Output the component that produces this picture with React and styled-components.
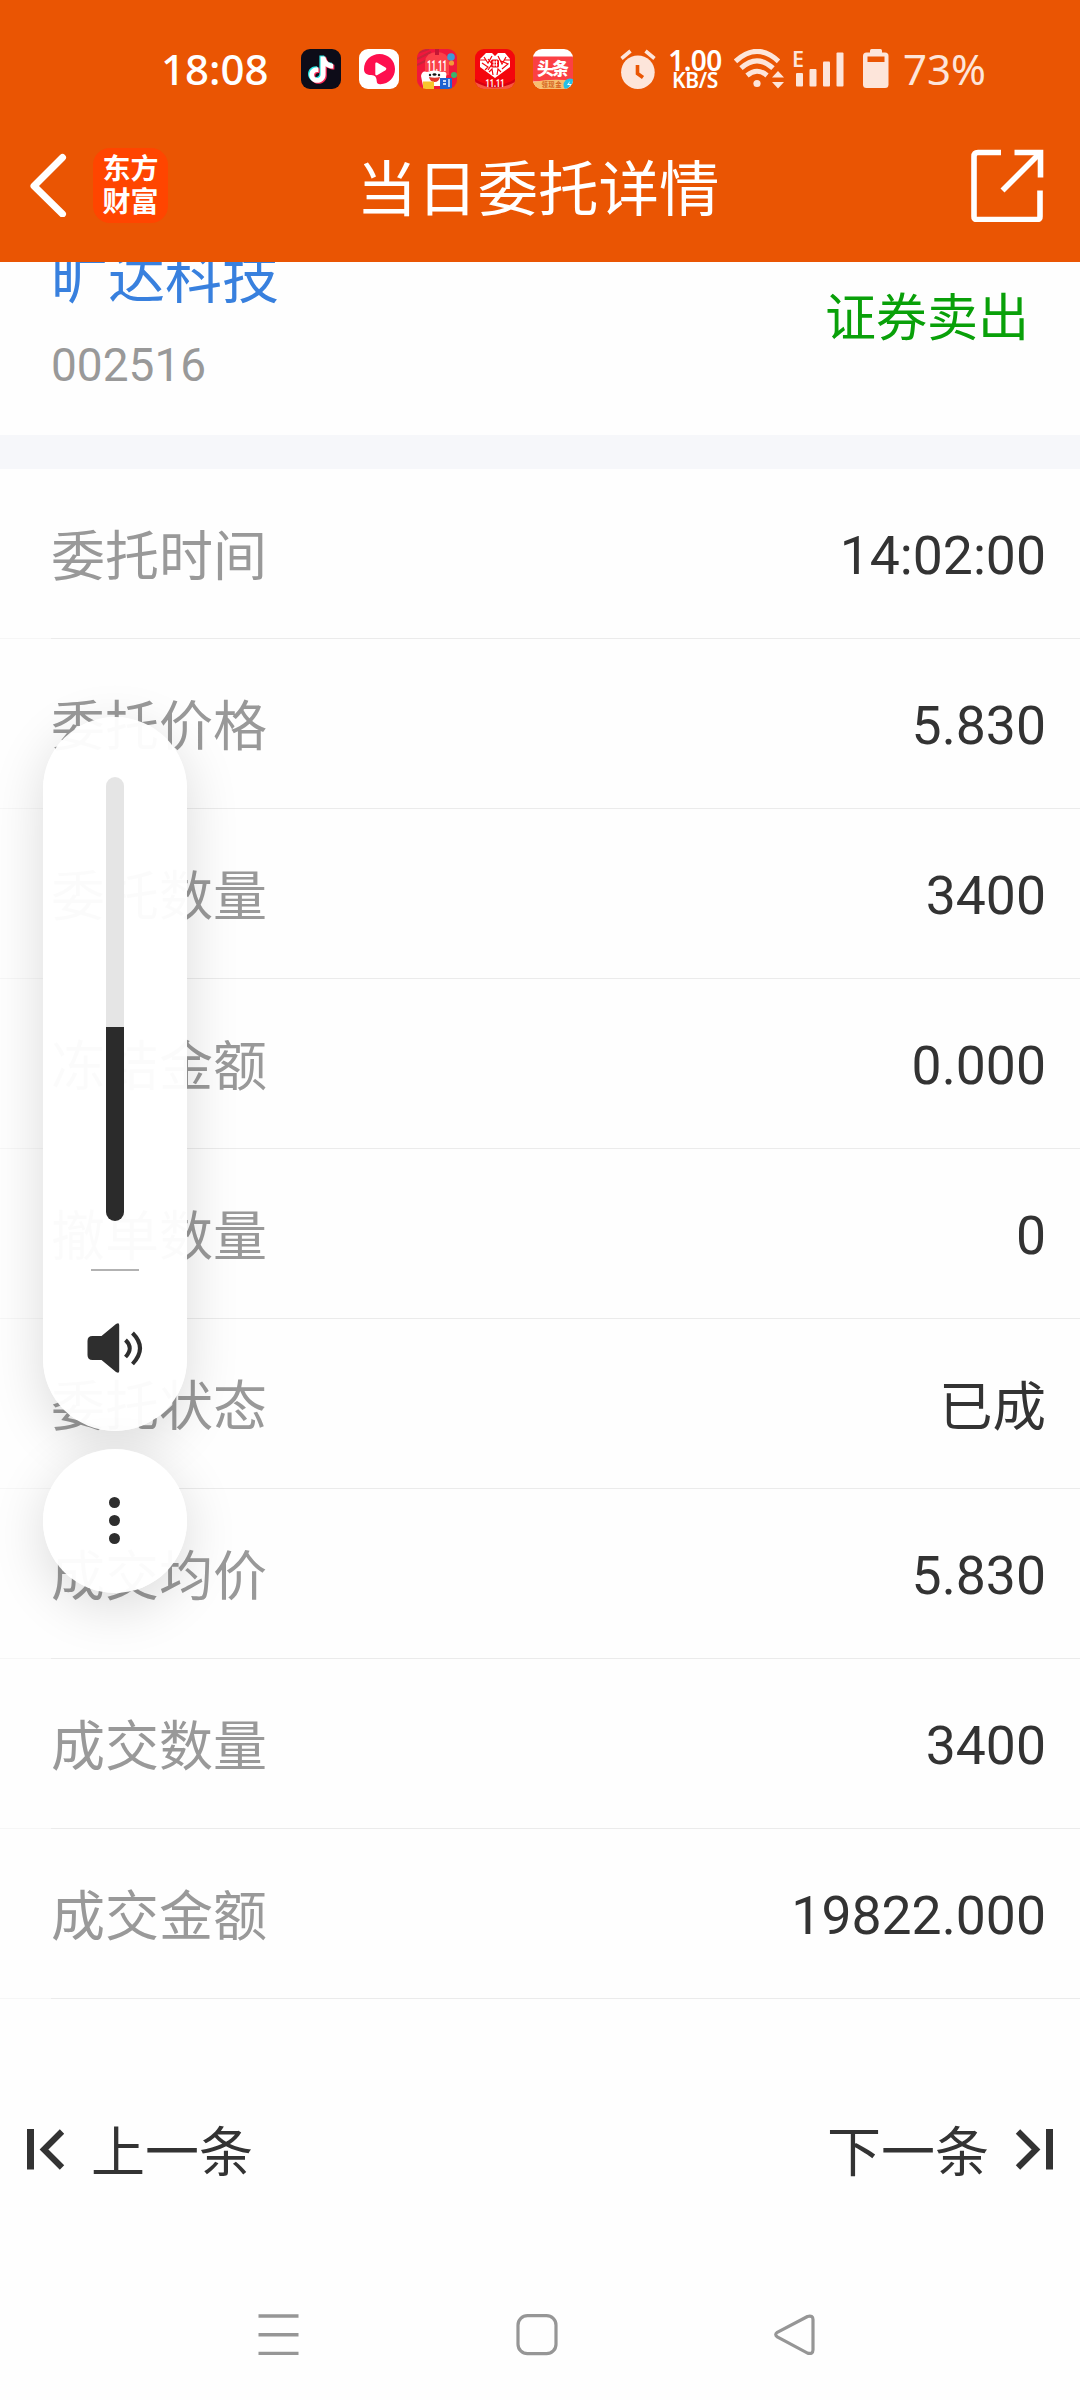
import React from "react";
import styled, { createGlobalStyle } from "styled-components";

const ORANGE = "#ea5503";
const INK = "#333333";
const PALE = "#fde5da";

const GlobalStyle = createGlobalStyle`
  * { box-sizing: border-box; }
  html, body { margin: 0; padding: 0; }
  body {
    background: #fefefe;
    font-family: Roboto, "Noto Sans CJK SC", sans-serif;
    color: ${INK};
  }
  svg { display: block; flex: none; }
`;

const Screen = styled.div`
  position: relative;
  width: 1080px;
  height: 2400px;
  overflow: hidden;
  background: #fefefe;
  display: flex;
  flex-direction: column;
`;

const TopArea = styled.header`
  height: 262px;
  flex: none;
  background: ${ORANGE};
  color: #fff;
  z-index: 1;
`;

const StatusBar = styled.div`
  height: 108px;
  padding: 30px 94px 0 161px;
  display: flex;
  align-items: flex-start;
  justify-content: space-between;
  font-family: "Noto Sans", sans-serif;
`;

const StatusLeft = styled.div`
  display: flex;
  align-items: center;
  height: 78px;
`;

const Clock = styled.span`
  width: 140px;
  padding-bottom: 1px;
  font-size: 42px;
  line-height: 76px;
  font-weight: 500;
`;

const AppIcons = styled.div`
  display: flex;
  gap: 18px;
`;

const StatusRight = styled.div`
  display: flex;
  align-items: center;
  height: 78px;
`;

const NetSpeed = styled.div`
  display: flex;
  flex-direction: column;
  align-items: center;
  width: 56px;
  margin: 1px 11px 0 10px;
  font-weight: 600;
`;

const SpeedValue = styled.span`
  font-size: 28px;
  line-height: 22px;
  letter-spacing: -0.6px;
`;

const SpeedUnit = styled.span`
  font-size: 21px;
  line-height: 19px;
  letter-spacing: -0.4px;
`;

const BatteryText = styled.span`
  width: 83px;
  margin-left: 14px;
  padding-bottom: 1px;
  font-size: 42px;
  line-height: 76px;
  color: ${PALE};
`;

const Spacer = styled.span`
  width: ${(p) => p.$w}px;
  flex: none;
`;

const TitleBar = styled.div`
  height: 154px;
  padding: 0 36px 0 28px;
  display: grid;
  grid-template-columns: 320px 1fr 320px;
  align-items: center;
`;

const TitleLeft = styled.div`
  display: flex;
  align-items: center;
  gap: 25px;
`;

const BrandBadge = styled.div`
  width: 75px;
  height: 75px;
  border-radius: 17px;
  background: #ff4500;
  display: flex;
  flex-direction: column;
  align-items: center;
  justify-content: center;
  padding-bottom: 3px;
  font-family: "Noto Sans CJK SC", sans-serif;
  font-weight: 700;
  font-size: 28px;
  line-height: 33px;
`;

const Title = styled.h1`
  margin: 11px -10px 0 -6px;
  font-size: 60.5px;
  line-height: 70px;
  font-weight: 400;
  text-align: center;
  white-space: nowrap;
`;

const TitleRight = styled.div`
  display: flex;
  justify-content: flex-end;
`;

const StockHead = styled.section`
  height: 173px;
  flex: none;
  padding: 0 51px;
  display: flex;
  justify-content: space-between;
`;

const StockInfo = styled.div`
  display: flex;
  flex-direction: column;
  margin-top: -23px;
`;

const StockName = styled.span`
  font-size: 57px;
  line-height: 80px;
  color: #3880de;
`;

const StockCode = styled.span`
  margin-top: 19px;
  font-size: 46px;
  line-height: 54px;
  color: #999;
`;

const TradeSide = styled.span`
  margin-top: 22px;
  font-size: 51px;
  line-height: 70px;
  color: #09a009;
`;

const Band = styled.div`
  height: 34px;
  flex: none;
  background: #f6f7fa;
`;

const Row = styled.div`
  height: 170px;
  flex: none;
  padding: 4px 34px 0 51px;
  display: flex;
  align-items: center;
  justify-content: space-between;
  font-size: 54px;
  line-height: 70px;
  background: linear-gradient(90deg, #f6f6f6 51px, #ebebeb 51px) left bottom / 100% 1px no-repeat;
`;

const Label = styled.span`
  padding-top: 3px;
  color: #999;
`;

const Value = styled.span`
  font-size: 53.5px;
  padding-top: ${(p) => (p.$cjk ? 3 : 0)}px;
  color: ${INK};
`;

const Pager = styled.div`
  height: 300px;
  flex: none;
  padding: 115px 27px 0;
  display: flex;
  align-items: flex-start;
  justify-content: space-between;
`;

const PagerButton = styled.div`
  display: flex;
  align-items: center;
  gap: 26px;
  height: 70px;
  font-size: 54px;
  line-height: 70px;
`;

const PagerText = styled.span`
  padding-top: 9px;
`;

const NavBar = styled.nav`
  height: 101px;
  padding: 15px 264px 0 257px;
  display: flex;
  justify-content: space-between;
`;

const VolumeOverlay = styled.aside`
  position: absolute;
  left: 43px;
  top: 717px;
  width: 144px;
  display: flex;
  flex-direction: column;
  gap: 18px;
  z-index: 2;
`;

const floating = `
  background: rgba(255, 255, 255, 0.965);
  box-shadow: 0 14px 54px rgba(0, 0, 0, 0.14);
`;

const VolumePanel = styled.div`
  ${floating}
  height: 714px;
  border-radius: 72px;
  padding-top: 60px;
  display: flex;
  flex-direction: column;
  align-items: center;
`;

const Track = styled.div`
  width: 18px;
  height: 444px;
  border-radius: 9px;
  overflow: hidden;
  background: rgba(226, 226, 226, 0.9);
  display: flex;
  flex-direction: column;
  justify-content: flex-end;
`;

const TrackFill = styled.div`
  height: 194px;
  background: #2b2b2b;
`;

const PanelRule = styled.div`
  width: 48px;
  height: 2px;
  margin: 48px 0 52px;
  background: #b2b2b2;
`;

const MoreButton = styled.div`
  ${floating}
  height: 144px;
  border-radius: 50%;
  padding: 0 2px 1px 0;
  display: flex;
  flex-direction: column;
  align-items: center;
  justify-content: center;
  gap: 7.4px;
`;

const Dot = styled.i`
  width: 11px;
  height: 11px;
  border-radius: 50%;
  background: #2e2e2e;
`;

const NOTE = "M19.600 7.500h4.800c.5 4.200 3.400 7 7.800 7.300v4.800c-2.900 0-5.500-.9-7.600-2.400v8.300c0 5-3.800 8.300-8.300 8.300-4.600 0-8.100-3.500-8.100-7.800 0-5 4.200-8.400 9.200-7.800v5c-2.400-.6-4.300.6-4.300 2.700 0 1.800 1.400 3 3.200 3 1.900 0 3.300-1.300 3.300-3.500z";

const DouyinIcon = () => (
  <svg width="40" height="40" viewBox="0 0 40 40">
    <rect width="40" height="40" rx="9" fill="#0d0c18" />
    <path d={NOTE} fill="#25e6e2" transform="translate(-1.200 -1)" />
    <path d={NOTE} fill="#fb2b58" transform="translate(1.200 1)" />
    <path d={NOTE} fill="#fff" />
  </svg>
);

const VideoIcon = () => (
  <svg width="40" height="40" viewBox="0 0 40 40">
    <rect width="40" height="40" rx="9" fill="#fff" />
    <path d="M20.500 5C29.200 5 36 11.400 36 20c0 8.700-6.300 14.800-14.500 15.200-2.500.1-3.700-.7-3.800-3.200-.1-3.800-1.700-5.800-5.600-5.900-4-.1-7.100-1.600-7.100-5.900C5 11.400 12 5 20.500 5z" fill="#fe0f4e" />
    <path d="M16.300 14.900c0-1.300 1-1.700 2.100-1.100l8.100 4.800c1.100.7 1.100 1.900 0 2.600l-8.100 4.800c-1.100.7-2.100.2-2.100-1.100z" fill="#fff" />
  </svg>
);

const FestivalIcon = () => (
  <svg width="40" height="40" viewBox="0 0 40 40">
    <defs>
      <clipPath id="festival"><rect width="40" height="40" rx="9" /></clipPath>
    </defs>
    <g clipPath="url(#festival)">
      <rect width="40" height="40" fill="#f0183c" />
      <path d="M0 4l12-4M0 10l14-7M0 16l10-5" stroke="#c8243a" strokeWidth="2" />
      <path d="M8 26V13Q9 3 20 3t12 10v13z" fill="#fb4149" />
      <path d="M18 0h4v6h-4z" fill="#c51735" />
      <circle cx="34" cy="8" r="3.800" fill="#3f9bd6" />
      <circle cx="34.500" cy="14" r="2.600" fill="#f29a37" />
      <circle cx="37" cy="26" r="3" fill="#39b56b" />
      <path d="M4 27q1-6 6-4 7-3 15 0 6-1 4 5v9H6z" fill="#fff" />
      <text x="10" y="21.500" fill="#fff" fontSize="14" fontWeight="700" fontFamily="Roboto, sans-serif" textLength="20" lengthAdjust="spacingAndGlyphs">11.11</text>
      <circle cx="13" cy="26" r="1.200" fill="#222" />
      <circle cx="22" cy="26" r="1.200" fill="#222" />
      <ellipse cx="17.500" cy="25.500" rx="2" ry="1.200" fill="#111" />
      <path d="M12 28q6 1.500 11 0-1 5-5.500 5T12 28z" fill="#e2362c" />
      <rect x="6" y="32.500" width="11" height="7.500" fill="#f7c52c" />
      <rect x="23" y="29" width="12" height="11" fill="#1f62d0" />
      <path d="M26 32h3M26 35h3M32 30v8" stroke="#fff" strokeWidth="1.300" />
    </g>
  </svg>
);

const HeartIcon = () => (
  <svg width="40" height="40" viewBox="0 0 40 40">
    <defs>
      <clipPath id="heart"><rect width="40" height="40" rx="9" /></clipPath>
    </defs>
    <g clipPath="url(#heart)">
      <rect width="40" height="40" fill="#f4060d" />
      <path d="M0 31q20 14 40 0v9H0z" fill="#f8573f" />
      <path d="M0 30q20 13 40 0v3q-20 11-40 0z" fill="#d60012" />
      <path d="M11 4h6l3 3 3-3h7l5 6v8L20 29 5 18v-8z" fill="#fff" />
      <path d="M9 8l4 6 4-7M7 14l6 4-3 3M13 10l4 5-4 6M23 7l4 8 4-7M26 12l7 3-6 5M14 23l3-3 1 6M26 23l-3-3-1 6M5 11h6M29 11h6" fill="none" stroke="#f4060d" strokeWidth="1.200" />
      <rect x="16" y="10.500" width="8" height="8" rx="1.500" fill="#f4060d" />
      <path d="M17.500 13h5M17.500 16h5M19 11.500v6M21.500 11.500v6" stroke="#fff" strokeWidth="1" />
      <text x="10.500" y="38" fill="#fff" fontSize="10" fontWeight="700" fontFamily="Roboto, sans-serif" textLength="19" lengthAdjust="spacingAndGlyphs">11.11</text>
    </g>
  </svg>
);

const HeadlineIcon = () => (
  <svg width="40" height="40" viewBox="0 0 40 40">
    <defs>
      <clipPath id="headline"><rect width="40" height="40" rx="9" /></clipPath>
    </defs>
    <g clipPath="url(#headline)">
      <rect width="40" height="40" fill="#fff" />
      <rect y="7.500" width="40" height="25" fill="#fb4044" />
      <path d="M0 33q20-4 40-1v8H0z" fill="#f8bf70" />
      <text x="4" y="26" fill="#fff" fontSize="17" fontWeight="900" fontFamily="'Noto Sans CJK SC', sans-serif" textLength="32">头条</text>
      <text x="8.500" y="38.300" fill="#d5641f" fontSize="6.300" fontWeight="700" fontFamily="'Noto Sans CJK SC', sans-serif" textLength="20">领现金</text>
      <circle cx="37" cy="36" r="6.500" fill="#23c0e8" />
      <path d="M37 32l-3 4h3l-1.500 3 3.500-4h-3z" fill="#fff" />
    </g>
  </svg>
);

const AlarmIcon = () => (
  <svg width="37" height="40" viewBox="620 49 37 40">
    <circle cx="637.900" cy="72.200" r="16.800" fill={PALE} />
    <path d="M621.500 58.500l9-7.500M654.500 58.500l-9-7.500" stroke={PALE} strokeWidth="3.600" />
    <path d="M637.500 65v8.500l5.500 4" fill="none" stroke={ORANGE} strokeWidth="3.600" />
  </svg>
);

const WifiIcon = () => (
  <svg width="50" height="40" viewBox="735 48 50 40">
    <g fill="none" stroke={PALE} strokeWidth="5">
      <path d="M736.500 60.300Q758 40.500 779.500 60.300" />
      <path d="M742 67.200Q758 52.500 774 67.200" />
      <path d="M748 74.500Q758 66 768 74.500" />
    </g>
    <circle cx="758" cy="82.500" r="3.600" fill={PALE} />
    <path d="M773 76.500l6-6.500 6 6.500zM773 81l6 6.500 6-6.500z" fill={PALE} />
  </svg>
);

const SignalIcon = () => (
  <svg width="52" height="40" viewBox="794 48 52 40">
    <text x="793" y="65.500" fill={PALE} fontSize="21.500" fontWeight="600" fontFamily="'Noto Sans', sans-serif">E</text>
    <g fill={PALE}>
      <rect x="797" y="72" width="7" height="13.500" rx="1" />
      <rect x="810.500" y="68" width="7" height="17.500" rx="1" />
      <rect x="824" y="60.500" width="7" height="25" rx="1" />
      <rect x="837.500" y="51.500" width="7" height="34" rx="1" />
    </g>
  </svg>
);

const BatteryIcon = () => (
  <svg width="26" height="40" viewBox="864 49 26 40">
    <rect x="871" y="49" width="12" height="6" rx="1.500" fill={PALE} />
    <rect x="864" y="52.500" width="25.500" height="35.500" rx="3.500" fill={PALE} />
    <rect x="868.500" y="56.500" width="17" height="5.500" fill={ORANGE} />
  </svg>
);

const BackIcon = () => (
  <svg width="40" height="64" viewBox="28 153 40 64">
    <path d="M62.500 158.500L34 187l28.500 28" transform="translate(0 -1)" fill="none" stroke="#fff" strokeWidth="7" strokeLinecap="round" strokeLinejoin="round" />
  </svg>
);

const ShareIcon = () => (
  <svg width="73" height="73" viewBox="971 149.500 73 73">
    <g fill="none" stroke="#fff" strokeWidth="5.600">
      <path d="M1001 153h-23q-4 0-4 4v60q0 3 3 3h60q3 0 3-3v-26" />
      <path d="M1014.500 153h26v25" />
      <path d="M1002.500 191l38-38" />
    </g>
  </svg>
);

const SpeakerIcon = () => (
  <svg width="56" height="50" viewBox="87.500 1323 56 50">
    <path d="M93 1336h9l14.500-12q3.200-2 3.200 1v46q0 3-3.200 1l-14.500-12h-9q-5 0-5-5v-14q0-5 5-5z" fill="#2e2e2e" />
    <path d="M126 1340q8.500 8 0 17M133 1333q15 15 0 31" fill="none" stroke="#2e2e2e" strokeWidth="4" />
  </svg>
);

const EdgeIcon = ({ flip }) => (
  <svg width="38" height="42" viewBox="27 2128 38 42">
    <g transform={flip ? "translate(92 0) scale(-1 1)" : undefined}>
      <rect x="27" y="2129" width="7" height="40.500" fill={INK} />
      <path d="M62 2131.500l-18 18 18 18" fill="none" stroke={INK} strokeWidth="6.200" />
    </g>
  </svg>
);

const MenuIcon = () => (
  <svg width="42" height="42" viewBox="0 0 42 42">
    <path d="M1.500 2h40M1.500 20.700h40M1.500 39.400h40" stroke="#969696" strokeWidth="3.400" />
  </svg>
);

const HomeIcon = () => (
  <svg width="42" height="42" viewBox="0 0 42 42">
    <rect x="2" y="1.700" width="38" height="38" rx="9.500" fill="none" stroke="#969696" strokeWidth="3.200" />
  </svg>
);

const TriangleIcon = () => (
  <svg width="42" height="42" viewBox="0 0 42 42">
    <path d="M33.500 2.500L3.300 18.300q-3.200 2.300 0 4.600l30.200 16.200q5.500 1.500 5.500-3.300V5.500q0-4.500-5.500-3z" fill="none" stroke="#969696" strokeWidth="3.200" />
  </svg>
);

const rows = [
  { label: "委托时间", value: "14:02:00" },
  { label: "委托价格", value: "5.830" },
  { label: "委托数量", value: "3400" },
  { label: "冻结金额", value: "0.000" },
  { label: "撤单数量", value: "0" },
  { label: "委托状态", value: "已成", cjk: true },
  { label: "成交均价", value: "5.830" },
  { label: "成交数量", value: "3400" },
  { label: "成交金额", value: "19822.000" },
];

export default function App() {
  return (
    <>
      <GlobalStyle />
      <Screen>
        <TopArea>
          <StatusBar>
            <StatusLeft>
              <Clock>18:08</Clock>
              <AppIcons>
                <DouyinIcon />
                <VideoIcon />
                <FestivalIcon />
                <HeartIcon />
                <HeadlineIcon />
              </AppIcons>
            </StatusLeft>
            <StatusRight>
              <AlarmIcon />
              <NetSpeed>
                <SpeedValue>1.00</SpeedValue>
                <SpeedUnit>KB/S</SpeedUnit>
              </NetSpeed>
              <WifiIcon />
              <Spacer $w={9} />
              <SignalIcon />
              <Spacer $w={18} />
              <BatteryIcon />
              <BatteryText>73%</BatteryText>
            </StatusRight>
          </StatusBar>
          <TitleBar>
            <TitleLeft>
              <BackIcon />
              <BrandBadge>
                <span>东方</span>
                <span>财富</span>
              </BrandBadge>
            </TitleLeft>
            <Title>当日委托详情</Title>
            <TitleRight>
              <ShareIcon />
            </TitleRight>
          </TitleBar>
        </TopArea>
        <StockHead>
          <StockInfo>
            <StockName>旷达科技</StockName>
            <StockCode>002516</StockCode>
          </StockInfo>
          <TradeSide>证券卖出</TradeSide>
        </StockHead>
        <Band />
        {rows.map(({ label, value, cjk }) => (
          <Row key={label}>
            <Label>{label}</Label>
            <Value $cjk={cjk}>{value}</Value>
          </Row>
        ))}
        <Pager>
          <PagerButton>
            <EdgeIcon />
            <PagerText>上一条</PagerText>
          </PagerButton>
          <PagerButton>
            <PagerText>下一条</PagerText>
            <EdgeIcon flip />
          </PagerButton>
        </Pager>
        <NavBar>
          <MenuIcon />
          <HomeIcon />
          <TriangleIcon />
        </NavBar>
        <VolumeOverlay>
          <VolumePanel>
            <Track>
              <TrackFill />
            </Track>
            <PanelRule />
            <SpeakerIcon />
          </VolumePanel>
          <MoreButton>
            <Dot />
            <Dot />
            <Dot />
          </MoreButton>
        </VolumeOverlay>
      </Screen>
    </>
  );
}
